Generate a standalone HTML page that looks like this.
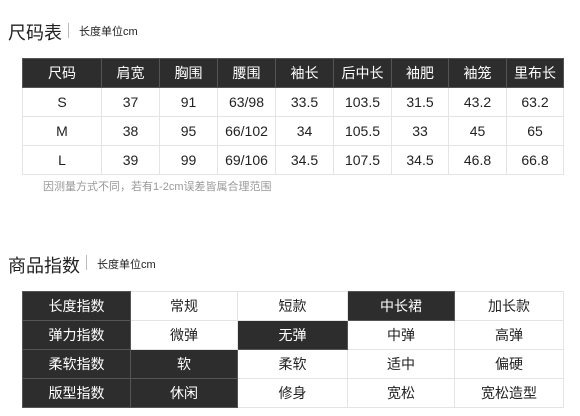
<!DOCTYPE html>
<html><head><meta charset="utf-8"><style>
body{margin:0;width:580px;height:416px;background:#fff;font-family:"Liberation Sans","Noto Sans CJK SC",sans-serif;position:relative;overflow:hidden}
.t{position:absolute;color:#222;font-size:18px;line-height:22px}
.s{position:absolute;font-size:11px;color:#222;line-height:14px}
.bar{position:absolute;width:1px;background:#bbb}
table{position:absolute;border-collapse:collapse;table-layout:fixed}
td{border:1px solid #e4e4e4;text-align:center;font-size:14px;color:#222;height:28px;padding:0}
.d{background:#2d2d2d;color:#fff;border-color:#555}
</style></head><body>
<div class="t" style="left:8px;top:22px">尺码表</div>
<div class="bar" style="left:68px;top:23px;height:15px"></div>
<div class="s" style="left:79px;top:25px">长度单位cm</div>
<table style="left:22px;top:58px;width:541px">
<colgroup><col style="width:79px"><col style="width:58px"><col style="width:58px"><col style="width:58px"><col style="width:58px"><col style="width:58px"><col style="width:57px"><col style="width:58px"><col style="width:57px"></colgroup>
<tr><td class="d">尺码</td><td class="d">肩宽</td><td class="d">胸围</td><td class="d">腰围</td><td class="d">袖长</td><td class="d">后中长</td><td class="d">袖肥</td><td class="d">袖笼</td><td class="d">里布长</td></tr>
<tr><td>S</td><td>37</td><td>91</td><td>63/98</td><td>33.5</td><td>103.5</td><td>31.5</td><td>43.2</td><td>63.2</td></tr>
<tr><td>M</td><td>38</td><td>95</td><td>66/102</td><td>34</td><td>105.5</td><td>33</td><td>45</td><td>65</td></tr>
<tr><td>L</td><td>39</td><td>99</td><td>69/106</td><td>34.5</td><td>107.5</td><td>34.5</td><td>46.8</td><td>66.8</td></tr>
</table>
<div class="s" style="left:43px;top:180px;color:#999">因测量方式不同，若有1-2cm误差皆属合理范围</div>
<div class="t" style="left:8px;top:255px">商品指数</div>
<div class="bar" style="left:86px;top:255px;height:15px"></div>
<div class="s" style="left:97px;top:258px">长度单位cm</div>
<table style="left:22px;top:291px;width:541px">
<colgroup><col style="width:108px"><col style="width:107px"><col style="width:110px"><col style="width:107px"><col style="width:109px"></colgroup>
<tr><td class="d">长度指数</td><td>常规</td><td>短款</td><td class="d">中长裙</td><td>加长款</td></tr>
<tr><td class="d">弹力指数</td><td>微弹</td><td class="d">无弹</td><td>中弹</td><td>高弹</td></tr>
<tr><td class="d">柔软指数</td><td class="d">软</td><td>柔软</td><td>适中</td><td>偏硬</td></tr>
<tr><td class="d">版型指数</td><td class="d">休闲</td><td>修身</td><td>宽松</td><td>宽松造型</td></tr>
</table>
</body></html>
